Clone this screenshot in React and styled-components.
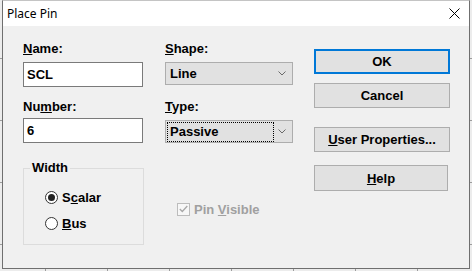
import styled, { createGlobalStyle } from 'styled-components';

const GlobalStyle = createGlobalStyle`
  html, body {
    margin: 0;
    width: 472px;
    height: 271px;
    overflow: hidden;
  }
  body {
    background-color: #ececec;
    background-image:
      repeating-linear-gradient(90deg, transparent 0 45px, #9c9c9c 45px 46px, transparent 46px 62px),
      repeating-linear-gradient(180deg, transparent 0 58px, #9c9c9c 58px 59px, transparent 59px 62px);
    font-family: 'Liberation Sans', Arial, sans-serif;
  }
`;

const Window = styled.div`
  box-sizing: border-box;
  width: 468px;
  height: 269px;
  margin-left: 2px;
  border: 1px solid #6f6f6f;
  border-top-color: #c4c4c4;
  display: flex;
  flex-direction: column;
  background: #f0f0f0;
`;

const TitleBar = styled.div`
  height: 25px;
  flex: none;
  background: #ffffff;
  display: flex;
  align-items: center;
  justify-content: space-between;
  padding: 0 9px 0 4px;
  font-family: 'Noto Sans', 'Open Sans', sans-serif;
  font-size: 12px;
  color: #000;
`;

const Body = styled.div`
  flex: 1;
  display: flex;
  padding: 15px 0 0 20px;
`;

const Column = styled.div`
  display: flex;
  flex-direction: column;
  width: ${(p) => p.$width}px;
  margin-right: ${(p) => p.$gap || 0}px;
`;

const Label = styled.div`
  font-size: 13px;
  font-weight: bold;
  line-height: 16px;
  color: #000;
  margin-top: ${(p) => p.$top || 0}px;
`;

const TextBox = styled.div`
  box-sizing: border-box;
  height: 25px;
  margin-top: ${(p) => p.$top || 0}px;
  border: 1px solid #7a7a7a;
  background: #fff;
  padding-left: 3px;
  display: flex;
  align-items: center;
  font-size: 13px;
  font-weight: bold;
`;

const Combo = styled.div`
  box-sizing: border-box;
  height: 23px;
  margin-top: 5px;
  border: 1px solid #adadad;
  background: #e1e1e1;
  display: flex;
  align-items: center;
  justify-content: space-between;
  padding: 0 6px 0 1px;
`;

const ComboValue = styled.div`
  box-sizing: border-box;
  width: 107px;
  height: 20px;
  border: 1px ${(p) => (p.$focused ? 'dotted #000' : 'solid transparent')};
  padding-left: 2px;
  display: flex;
  align-items: center;
  font-size: 13px;
  font-weight: bold;
`;

const GroupBox = styled.div`
  position: relative;
  box-sizing: border-box;
  width: 121px;
  height: 77px;
  margin-top: 25px;
  border: 1px solid #dcdcdc;
  padding: 20px 0 0 21px;
  display: flex;
  flex-direction: column;
  gap: 10px;
`;

const Legend = styled.span`
  position: absolute;
  top: -9px;
  left: 6px;
  padding: 0 2px;
  background: #f0f0f0;
  font-size: 13px;
  font-weight: bold;
  line-height: 16px;
`;

const OptionRow = styled.label`
  display: flex;
  align-items: center;
  gap: 4px;
  height: 16px;
  font-size: 13px;
  font-weight: bold;
  color: ${(p) => (p.$disabled ? '#a0a0a0' : '#000')};
  margin-top: ${(p) => p.$top || 0}px;
  padding-left: ${(p) => p.$indent || 0}px;
`;

const Radio = styled.span`
  box-sizing: border-box;
  width: 13px;
  height: 13px;
  border-radius: 50%;
  border: 1px solid #333;
  background: #fff;
  display: flex;
  align-items: center;
  justify-content: center;
  &::after {
    content: '';
    width: 7px;
    height: 7px;
    border-radius: 50%;
    background: ${(p) => (p.$checked ? '#222' : 'transparent')};
  }
`;

const CheckBox = styled.span`
  box-sizing: border-box;
  width: 13px;
  height: 13px;
  border: 1px solid #bcbcbc;
  background: #f7f7f7;
  display: flex;
  align-items: center;
  justify-content: center;
`;

const Button = styled.div`
  box-sizing: border-box;
  width: ${(p) => p.$width || 136}px;
  height: ${(p) => p.$height || 25}px;
  margin-top: ${(p) => p.$top || 0}px;
  border: ${(p) => (p.$primary ? '2px solid #0078d7' : '1px solid #adadad')};
  background: #e1e1e1;
  display: flex;
  align-items: center;
  justify-content: center;
  font-size: 13px;
  font-weight: bold;
  color: #000;
`;

const Key = styled.span`
  text-decoration: underline;
  text-underline-offset: 1px;
`;

const Chevron = () => (
  <svg width="8" height="5" viewBox="0 0 8 5">
    <polyline points="0.5,0.5 4,4 7.5,0.5" fill="none" stroke="#6a6a6a" strokeWidth="1" />
  </svg>
);

const CloseIcon = () => (
  <svg width="11" height="11" viewBox="0 0 11 11">
    <path d="M0.5 0.5 L10.5 10.5 M10.5 0.5 L0.5 10.5" stroke="#000" strokeWidth="1" />
  </svg>
);

const Check = () => (
  <svg width="9" height="8" viewBox="0 0 9 8">
    <polyline points="0.8,4 3.3,6.5 8.3,1" fill="none" stroke="#a8a8a8" strokeWidth="1.3" />
  </svg>
);

export default function App() {
  return (
    <>
      <GlobalStyle />
      <Window>
        <TitleBar>
          <span>Place Pin</span>
          <CloseIcon />
        </TitleBar>
        <Body>
          <Column $width={120} $gap={22}>
            <Label>
              <Key>N</Key>ame:
            </Label>
            <TextBox $top={5}>SCL</TextBox>
            <Label $top={12}>
              Nu<Key>m</Key>ber:
            </Label>
            <TextBox $top={3}>6</TextBox>
            <GroupBox>
              <Legend>Width</Legend>
              <OptionRow>
                <Radio $checked />
                <span>
                  S<Key>c</Key>alar
                </span>
              </OptionRow>
              <OptionRow>
                <Radio />
                <span>
                  <Key>B</Key>us
                </span>
              </OptionRow>
            </GroupBox>
          </Column>
          <Column $width={128} $gap={21}>
            <Label>
              <Key>S</Key>hape:
            </Label>
            <Combo>
              <ComboValue>Line</ComboValue>
              <Chevron />
            </Combo>
            <Label $top={14}>
              <Key>T</Key>ype:
            </Label>
            <Combo>
              <ComboValue $focused>Passive</ComboValue>
              <Chevron />
            </Combo>
            <OptionRow $disabled $top={58} $indent={12}>
              <CheckBox>
                <Check />
              </CheckBox>
              <span>
                Pin <Key>V</Key>isible
              </span>
            </OptionRow>
          </Column>
          <Column $width={136}>
            <Button $primary $top={8}>OK</Button>
            <Button $top={9}>Cancel</Button>
            <Button $top={19}>
              <span>
                <Key>U</Key>ser Properties...
              </span>
            </Button>
            <Button $top={13} $width={134} $height={26}>
              <span>
                <Key>H</Key>elp
              </span>
            </Button>
          </Column>
        </Body>
      </Window>
    </>
  );
}
